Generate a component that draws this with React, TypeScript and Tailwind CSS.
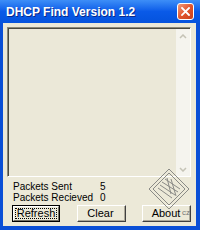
import React from 'react';

const body = { fontFamily: '"Liberation Sans", Arial, sans-serif' };

function Win98Button({ label, isDefault }: { label: string; isDefault?: boolean }) {
    if (isDefault) {
        return (
            <div className="h-[17px] w-[48px] border border-black bg-[#ece9d8]">
                <div className="h-full w-full border-t border-l border-white border-r border-b border-r-[#716f64] border-b-[#716f64] p-[1px]">
                    <div className="flex h-full w-full items-center justify-center border border-dotted border-black text-[11px] leading-none text-black">
                        {label}
                    </div>
                </div>
            </div>
        );
    }
    return (
        <div className="h-[17px] w-[49px] border-t border-l border-white border-r border-b border-r-[#404040] border-b-[#404040] bg-[#ece9d8]">
            <div className="flex h-full w-full items-center justify-center border-r border-b border-[#aca899] text-[11px] leading-none text-black">
                {label}
            </div>
        </div>
    );
}

function Watermark() {
    return (
        <div className="pointer-events-none absolute left-[148px] top-[168px]">
            <svg width="42" height="42" viewBox="0 0 42 42">
                <g fill="none" stroke="#8a8a86" strokeWidth="1">
                    <path d="M21 1 L41 21 L21 41 L1 21 Z" />
                    <path d="M21 5 L37 21 L21 37 L5 21 Z" />
                    <path d="M12 17 L27 27 M14 14 L30 24 M17 11 L32 21 M10 20 L24 30 M19 10 L23 26 M23 11 L28 28" />
                </g>
            </svg>
            <span className="absolute left-[34px] top-[41px] text-[8px] leading-none text-[#777]" style={body}>
                cz
            </span>
        </div>
    );
}

export default function App() {
    return (
        <div className="relative flex h-[230px] w-[200px] flex-col overflow-hidden bg-[#0a4fd6]">
            <div className="flex h-[23px] shrink-0 items-center justify-between bg-gradient-to-b from-[#3d8ef7] via-[#0a5ae8] to-[#0553dd] pl-[6px] pr-[6px]">
                <span
                    className="whitespace-nowrap text-[12px] font-bold leading-none text-white [text-shadow:1px_1px_0_#0a2a8a]"
                    style={body}
                >
                    DHCP Find Version 1.2
                </span>
                <div className="flex h-[17px] w-[17px] items-center justify-center rounded-[3px] border border-white bg-gradient-to-br from-[#f09a7a] via-[#e2542c] to-[#c7401c]">
                    <svg width="9" height="9" viewBox="0 0 9 9">
                        <path d="M1 1 L8 8 M8 1 L1 8" stroke="white" strokeWidth="1.8" strokeLinecap="square" />
                    </svg>
                </div>
            </div>
            <div className="mb-[4px] ml-[3px] mr-[4px] flex flex-1 flex-col bg-[#ece9d8] pl-[4px] pr-[5px] pt-[4px]" style={body}>
                <div className="flex h-[150px] shrink-0 border-t border-l border-[#8b8878] border-r border-b border-r-white border-b-white">
                    <div className="flex flex-1 border-t border-l border-[#4a4a40]">
                        <div className="flex-1 bg-[#ebe8d8]" />
                        <div className="flex w-[14px] flex-col bg-[#f5f4ee]">
                            <div className="flex h-[14px] items-center justify-center">
                                <svg width="8" height="5" viewBox="0 0 8 5">
                                    <path d="M1 4 L4 1 L7 4" stroke="#c5c3b6" strokeWidth="1.5" fill="none" />
                                </svg>
                            </div>
                            <div className="flex-1" />
                            <div className="flex h-[14px] items-center justify-center">
                                <svg width="8" height="5" viewBox="0 0 8 5">
                                    <path d="M1 1 L4 4 L7 1" stroke="#c5c3b6" strokeWidth="1.5" fill="none" />
                                </svg>
                            </div>
                        </div>
                    </div>
                </div>
                <div className="mt-[4px] flex flex-col whitespace-nowrap pl-[6px] text-[10px] leading-[11px] text-black">
                    <div className="flex">
                        <span className="w-[87px]">Packets Sent</span>
                        <span>5</span>
                    </div>
                    <div className="flex">
                        <span className="w-[87px]">Packets Recieved</span>
                        <span>0</span>
                    </div>
                </div>
                <div className="mt-[2px] flex justify-between pl-[5px]">
                    <Win98Button label="Refresh" isDefault />
                    <Win98Button label="Clear" />
                    <Win98Button label="About" />
                </div>
            </div>
            <Watermark />
        </div>
    );
}
